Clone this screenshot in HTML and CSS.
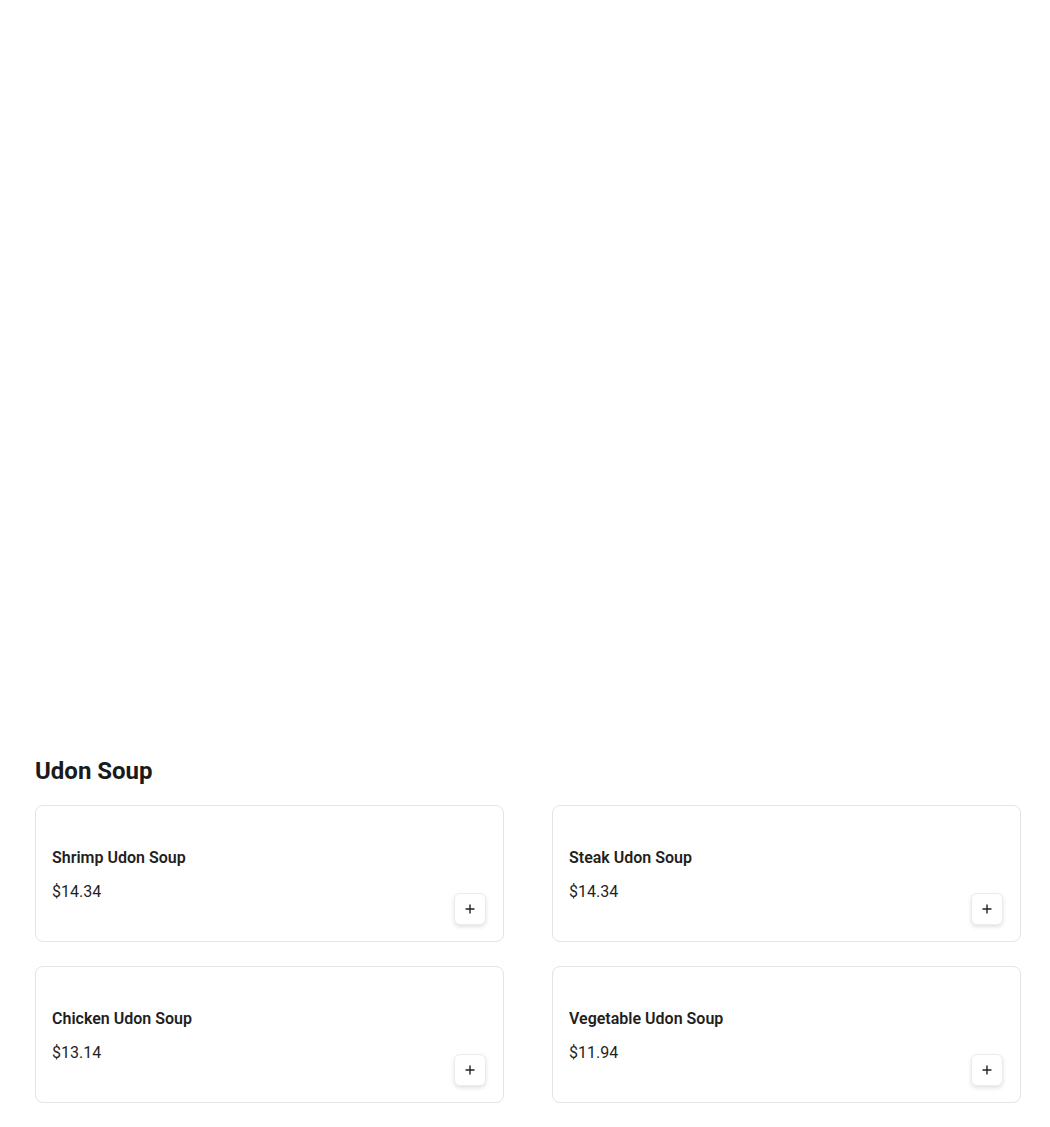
FILE: index.html
```html
<!DOCTYPE html>
<html lang="en">
<head>
  <meta charset="UTF-8">
  <meta name="viewport" content="width=device-width, initial-scale=1">
  <title>Udon Soup</title>
  <link rel="stylesheet" href="styles.css">
</head>
<body>
  <!-- Banner area (empty) -->
  <div class="banner"></div>

  <!-- Menu Category -->
  <section class="category">
    <h2>Udon Soup</h2>
    <div class="item-grid">
      <div class="item-card">
        <div class="item-info">
          <div class="item-name">Shrimp Udon Soup</div>
          <div class="item-price">$14.34</div>
        </div>
        <button class="add-btn" aria-label="Add">
          <svg width="12" height="12" viewBox="0 0 12 12"><path d="M6 2v8M2 6h8" stroke="#222" stroke-width="1.4" stroke-linecap="round"/></svg>
        </button>
      </div>
      <div class="item-card">
        <div class="item-info">
          <div class="item-name">Steak Udon Soup</div>
          <div class="item-price">$14.34</div>
        </div>
        <button class="add-btn" aria-label="Add">
          <svg width="12" height="12" viewBox="0 0 12 12"><path d="M6 2v8M2 6h8" stroke="#222" stroke-width="1.4" stroke-linecap="round"/></svg>
        </button>
      </div>
      <div class="item-card">
        <div class="item-info">
          <div class="item-name">Chicken Udon Soup</div>
          <div class="item-price">$13.14</div>
        </div>
        <button class="add-btn" aria-label="Add">
          <svg width="12" height="12" viewBox="0 0 12 12"><path d="M6 2v8M2 6h8" stroke="#222" stroke-width="1.4" stroke-linecap="round"/></svg>
        </button>
      </div>
      <div class="item-card">
        <div class="item-info">
          <div class="item-name">Vegetable Udon Soup</div>
          <div class="item-price">$11.94</div>
        </div>
        <button class="add-btn" aria-label="Add">
          <svg width="12" height="12" viewBox="0 0 12 12"><path d="M6 2v8M2 6h8" stroke="#222" stroke-width="1.4" stroke-linecap="round"/></svg>
        </button>
      </div>
    </div>
  </section>
</body>
</html>
```

FILE: styles.css
```css
body {
  font-family: Roboto, "Liberation Sans", Arial, sans-serif;
  background: #fff;
  margin: 0;
  padding: 0;
  color: #1f1f1f;
}
.banner {
  height: 755px;
}
.category {
  padding: 0 29px 0 35px;
}
.category h2 {
  margin: 0 0 18px;
  font-size: 24px;
  line-height: 32px;
  font-weight: 700;
  color: #1a1a1a;
}
.item-grid {
  display: grid;
  grid-template-columns: 1fr 1fr;
  column-gap: 48px;
  row-gap: 24px;
}
.item-card {
  display: flex;
  align-items: center;
  justify-content: space-between;
  box-sizing: border-box;
  min-height: 137px;
  padding: 16px 17px 16px 16px;
  border: 1px solid #e4e4e4;
  border-radius: 8px;
  background: #fff;
}
.item-info {
  padding-top: 2px;
}
.item-name {
  font-size: 16px;
  line-height: 24px;
  font-weight: 600;
  color: #1f1f1f;
}
.item-price {
  margin-top: 10px;
  font-size: 16px;
  line-height: 24px;
  color: #1f1f1f;
}
.add-btn {
  align-self: flex-end;
  width: 32px;
  height: 32px;
  padding: 0;
  border: 1px solid #ececec;
  border-radius: 6px;
  background: #fff;
  box-shadow: 0 2px 4px rgba(0,0,0,0.12);
  display: flex;
  align-items: center;
  justify-content: center;
  cursor: pointer;
}
```
